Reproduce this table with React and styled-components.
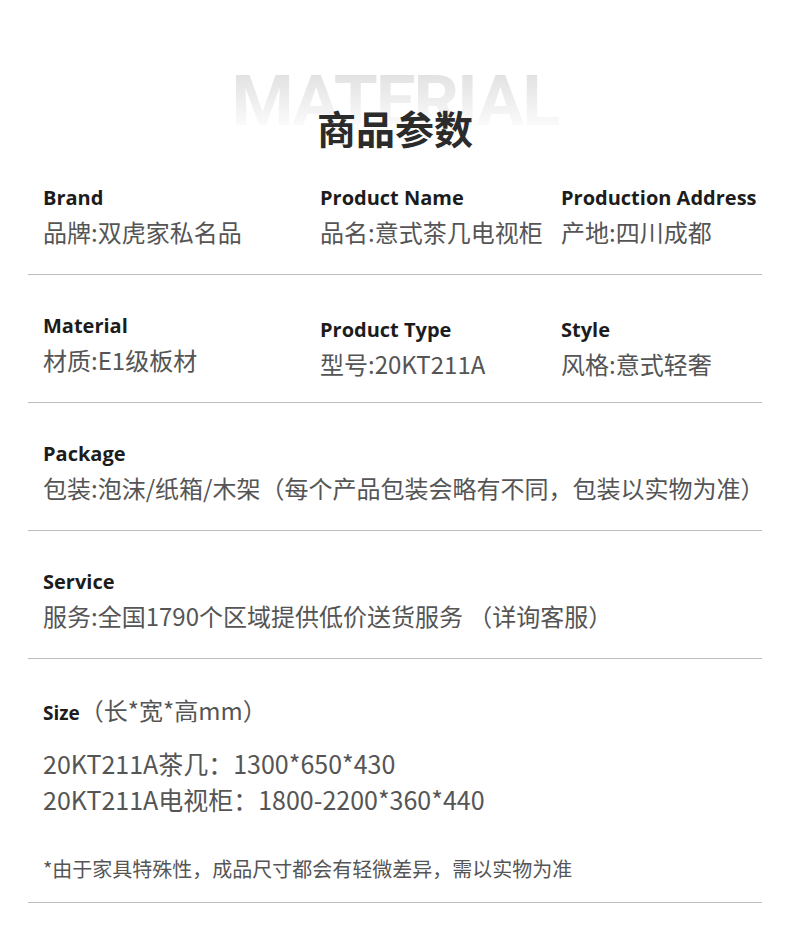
import React from 'react';
import styled, { createGlobalStyle } from 'styled-components';

const GlobalStyle = createGlobalStyle`
  html, body {
    margin: 0;
    padding: 0;
    background: #ffffff;
  }
  body {
    font-family: 'Open Sans', 'Noto Sans CJK SC', sans-serif;
  }
`;

const Page = styled.div`
  width: 790px;
  min-height: 928px;
  background: #ffffff;
`;

const Header = styled.div`
  position: relative;
  height: 147px;
  box-sizing: border-box;
  padding-top: 107px;
  display: flex;
  justify-content: center;
`;

const Watermark = styled.div`
  position: absolute;
  top: 63px;
  left: 0;
  right: 0;
  text-align: center;
  font-family: 'Roboto', sans-serif;
  font-weight: 700;
  font-size: 71px;
  line-height: 76px;
  letter-spacing: -2px;
  background: linear-gradient(to bottom, #e2e2e2 15%, #fbfbfb 85%);
  -webkit-background-clip: text;
  background-clip: text;
  color: transparent;
`;

const Title = styled.h1`
  position: relative;
  margin: 0;
  font-family: 'Noto Sans CJK SC', sans-serif;
  font-weight: 700;
  font-size: 39px;
  line-height: 40px;
  color: #2b2b2b;
`;

const Table = styled.div`
  margin: 0 28px;
`;

const Row = styled.div`
  display: grid;
  grid-template-columns: ${(p) => p.cols || '1fr'};
  padding: 37px 0 24px 15px;
  border-bottom: 1px solid #bdbdbd;
`;

const Cell = styled.div`
  margin-top: ${(p) => p.shift || 0}px;
  margin-bottom: ${(p) => -(p.shift || 0)}px;
`;

const Label = styled.div`
  font-family: 'Open Sans', sans-serif;
  font-weight: 700;
  font-size: 20px;
  line-height: 28px;
  color: #1c1c1c;
  white-space: nowrap;
`;

const Value = styled.div`
  margin-top: 2px;
  font-family: 'Noto Sans CJK SC', sans-serif;
  font-size: 24px;
  line-height: 36px;
  color: #555555;
  white-space: nowrap;
`;

const SizeRow = styled.div`
  padding: 33px 0 18px 15px;
  border-bottom: 1px solid #bdbdbd;
`;

const SizeHead = styled.div`
  display: flex;
  align-items: baseline;
`;

const SizeLabel = styled.span`
  font-family: 'Open Sans', sans-serif;
  font-weight: 700;
  font-size: 19px;
  color: #1c1c1c;
`;

const SizeUnit = styled.span`
  font-family: 'Noto Sans CJK SC', sans-serif;
  font-size: 24px;
  line-height: 36px;
  color: #555555;
`;

const SizeList = styled.div`
  margin-top: 17px;
`;

const SizeLine = styled.div`
  font-family: 'Noto Sans CJK SC', sans-serif;
  font-size: 25px;
  line-height: 36px;
  color: #555555;
  white-space: nowrap;
`;

const Note = styled.div`
  margin-top: 37px;
  font-family: 'Noto Sans CJK SC', sans-serif;
  font-size: 20px;
  line-height: 30px;
  color: #555555;
`;

const grid3 = '277px 241px 1fr';

const rows = [
  [
    { label: 'Brand', value: '品牌:双虎家私名品' },
    { label: 'Product Name', value: '品名:意式茶几电视柜' },
    { label: 'Production Address', value: '产地:四川成都' },
  ],
  [
    { label: 'Material', value: '材质:E1级板材' },
    { label: 'Product Type', value: '型号:20KT211A', shift: 4 },
    { label: 'Style', value: '风格:意式轻奢', shift: 4 },
  ],
  [
    {
      label: 'Package',
      value: '包装:泡沫/纸箱/木架（每个产品包装会略有不同，包装以实物为准）',
    },
  ],
  [{ label: 'Service', value: '服务:全国1790个区域提供低价送货服务 （详询客服）' }],
];

const App = () => {
  return (
    <Page>
      <GlobalStyle />
      <Header>
        <Watermark>MATERIAL</Watermark>
        <Title>商品参数</Title>
      </Header>
      <Table>
        {rows.map((cells, i) => (
          <Row key={i} cols={cells.length > 1 ? grid3 : '1fr'}>
            {cells.map((c) => (
              <Cell key={c.label} shift={c.shift}>
                <Label>{c.label}</Label>
                <Value>{c.value}</Value>
              </Cell>
            ))}
          </Row>
        ))}
        <SizeRow>
          <SizeHead>
            <SizeLabel>Size</SizeLabel>
            <SizeUnit>（长*宽*高mm）</SizeUnit>
          </SizeHead>
          <SizeList>
            <SizeLine>20KT211A茶几：1300*650*430</SizeLine>
            <SizeLine>20KT211A电视柜：1800-2200*360*440</SizeLine>
          </SizeList>
          <Note>*由于家具特殊性，成品尺寸都会有轻微差异，需以实物为准</Note>
        </SizeRow>
      </Table>
    </Page>
  );
};

export default App;
